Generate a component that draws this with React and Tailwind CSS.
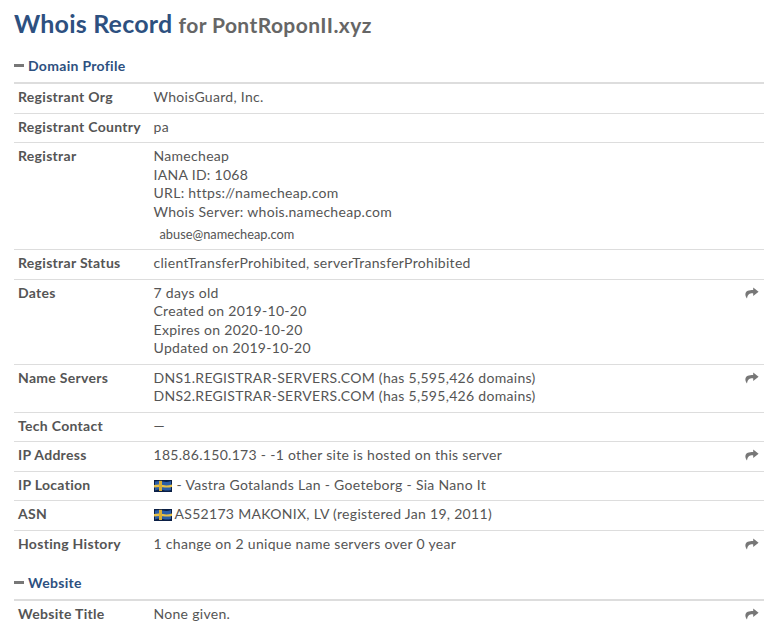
const rows = [
  { label: 'Registrant Org', lines: ['WhoisGuard, Inc.'] },
  { label: 'Registrant Country', lines: ['pa'] },
  {
    label: 'Registrar',
    lines: ['Namecheap', 'IANA ID: 1068', 'URL: https://namecheap.com', 'Whois Server: whois.namecheap.com'],
    extra: 'abuse@namecheap.com',
  },
  { label: 'Registrar Status', lines: ['clientTransferProhibited, serverTransferProhibited'] },
  {
    label: 'Dates',
    lines: ['7 days old', 'Created on 2019-10-20', 'Expires on 2020-10-20', 'Updated on 2019-10-20'],
    share: true,
  },
  {
    label: 'Name Servers',
    lines: ['DNS1.REGISTRAR-SERVERS.COM (has 5,595,426 domains)', 'DNS2.REGISTRAR-SERVERS.COM (has 5,595,426 domains)'],
    share: true,
  },
  { label: 'Tech Contact', lines: ['—'] },
  { label: 'IP Address', lines: ['185.86.150.173 - -1 other site is hosted on this server'], share: true },
  { label: 'IP Location', lines: ['- Vastra Gotalands Lan - Goeteborg - Sia Nano It'], flag: true },
  { label: 'ASN', lines: ['AS52173 MAKONIX, LV (registered Jan 19, 2011)'], flag: true, tight: true },
  { label: 'Hosting History', lines: ['1 change on 2 unique name servers over 0 year'], share: true },
];

function ShareIcon() {
  return (
    <svg viewBox="0 0 14 12" className="absolute right-[5px] top-[7px] w-[14px] h-[12px] fill-[#777]">
      <path d="M8.2 0.6 L13.6 4.8 L8.2 9 L8.2 6.4 C5 6.2 2.8 7 2 11.4 C0.6 9.8 0.3 8.4 0.4 7 C0.7 3.8 4 3 8.2 3 Z" />
    </svg>
  );
}

function Flag({ tight }) {
  return (
    <svg viewBox="0 0 18 12" className={`inline-block w-[18px] h-[12px] align-[-2px] ${tight ? 'mr-[3px]' : 'mr-[5px]'}`}>
      <rect width="18" height="12" fill="#0b1f45" />
      <path d="M1 1.5 Q5 0.5 9 1.5 T17 1 V10 Q13 11 9 10 T1 10.5 Z" fill="#2a5ea8" />
      <path d="M0 5 Q5 3.8 9 5 T18 4.4 V7 Q13 8 9 7.2 T0 7.6 Z" fill="#e6c04a" />
      <path d="M5 0.8 H8 V11 H5 Z" fill="#d9ae35" />
    </svg>
  );
}

function SectionTitle({ children }) {
  return (
    <div className="flex items-center border-b-2 border-[#ddd] h-[35px]">
      <span className="w-[10px] h-[3px] bg-[#777] mr-[4px]" />
      <h2 className="text-[14px] font-bold tracking-[0.3px] text-[#2d5080]">{children}</h2>
    </div>
  );
}

function Row({ row, first }) {
  return (
    <div className={`relative flex pt-[4px] pb-[6px] pl-[4px] text-[14px] leading-[18.5px] tracking-[0.3px] ${first ? '' : 'border-t border-[#ddd]'}`}>
      <div className="w-[135.5px] shrink-0 font-bold text-[#555]">{row.label}</div>
      <div className="text-[#555]">
        {row.lines.map(line => (
          <div key={line}>
            {row.flag && <Flag tight={row.tight} />}
            {line}
          </div>
        ))}
        {row.extra && (
          <div className="h-[22px] pl-[6px] pt-[4px] text-[12.8px] tracking-normal">{row.extra}</div>
        )}
      </div>
      {row.share && <ShareIcon />}
    </div>
  );
}

export default function App() {
  return (
    <div className="w-[781px] h-[640px] overflow-hidden bg-white px-[14px] font-['Lato',sans-serif]">
      <div className="w-[750px]">
        <h1 className="pt-[6px] h-[49px] text-[25px] leading-[34px] font-bold tracking-[0.2px] text-[#2d5080]">
          Whois Record <span className="text-[21px] tracking-[0.4px] text-[#666]">for PontRoponII.xyz</span>
        </h1>
        <SectionTitle>Domain Profile</SectionTitle>
        {rows.map((row, i) => (
          <Row key={row.label} row={row} first={i === 0} />
        ))}
        <div className="mt-[7px]">
          <SectionTitle>Website</SectionTitle>
          <Row first row={{ label: 'Website Title', lines: ['None given.'], share: true }} />
        </div>
      </div>
    </div>
  );
}
